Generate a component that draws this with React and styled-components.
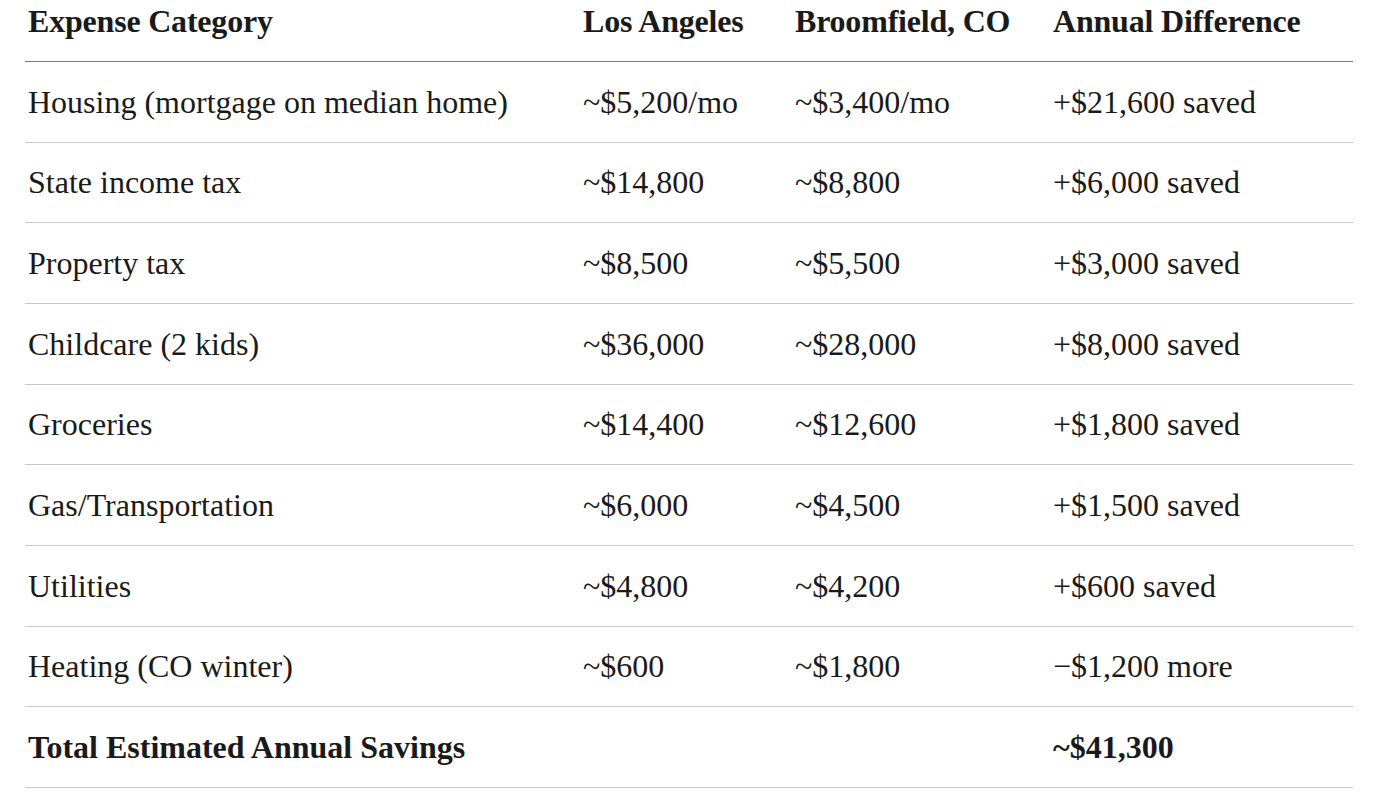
import styled, { createGlobalStyle } from "styled-components";

const GlobalStyle = createGlobalStyle`
  html, body {
    margin: 0;
    padding: 0;
    background: #ffffff;
  }
  body {
    font-family: "Liberation Serif", "Times New Roman", serif;
    color: #1a1a1a;
  }
`;

const rows = [
  ["Housing (mortgage on median home)", "~$5,200/mo", "~$3,400/mo", "+$21,600 saved"],
  ["State income tax", "~$14,800", "~$8,800", "+$6,000 saved"],
  ["Property tax", "~$8,500", "~$5,500", "+$3,000 saved"],
  ["Childcare (2 kids)", "~$36,000", "~$28,000", "+$8,000 saved"],
  ["Groceries", "~$14,400", "~$12,600", "+$1,800 saved"],
  ["Gas/Transportation", "~$6,000", "~$4,500", "+$1,500 saved"],
  ["Utilities", "~$4,800", "~$4,200", "+$600 saved"],
  ["Heating (CO winter)", "~$600", "~$1,800", "\u2212$1,200 more"],
];

const App = () => {
  return (
    <Page>
      <GlobalStyle />
      <Table>
        <colgroup>
          <col style={{ width: 555 }} />
          <col style={{ width: 212 }} />
          <col style={{ width: 258 }} />
          <col style={{ width: 303 }} />
        </colgroup>
        <thead>
          <tr>
            <HeadCell>Expense Category</HeadCell>
            <HeadCell>Los Angeles</HeadCell>
            <HeadCell>Broomfield, CO</HeadCell>
            <HeadCell>Annual Difference</HeadCell>
          </tr>
        </thead>
        <tbody>
          {rows.map((r, i) => (
            <tr key={i}>
              {r.map((c, j) => (
                <Cell key={j}>{c}</Cell>
              ))}
            </tr>
          ))}
          <tr>
            <Cell $bold>Total Estimated Annual Savings</Cell>
            <Cell />
            <Cell />
            <Cell $bold>~$41,300</Cell>
          </tr>
        </tbody>
      </Table>
    </Page>
  );
};

export default App;

const Page = styled.div`
  padding: 0 23px 0 25px;
`;

const Table = styled.table`
  width: 100%;
  border-collapse: collapse;
  table-layout: fixed;
  font-size: 32px;
`;

const HeadCell = styled.th`
  text-align: left;
  font-weight: 700;
  line-height: 42px;
  padding: 0 3px 19px;
  border-bottom: 1px solid #7a7a7a;
  white-space: nowrap;
  letter-spacing: -0.2px;
`;

const Cell = styled.td`
  text-align: left;
  font-weight: ${(p) => (p.$bold ? 700 : 400)};
  line-height: 48px;
  padding: 15.83px 3px;
  border-bottom: 1px solid #c9c9c9;
  white-space: nowrap;
`;
